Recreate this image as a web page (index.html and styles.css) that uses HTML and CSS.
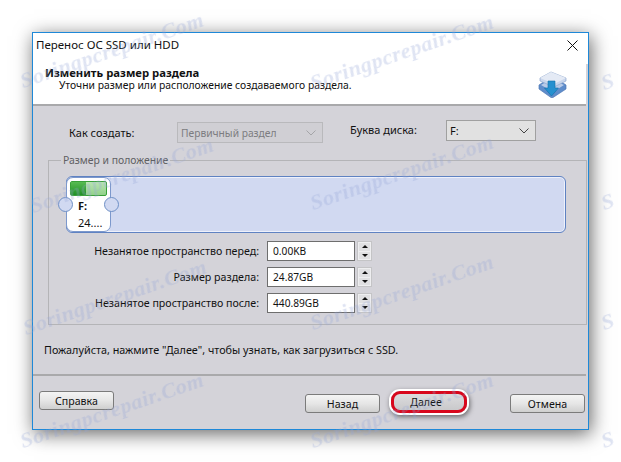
FILE: index.html
```html
<!DOCTYPE html>
<html lang="ru">
<head>
  <meta charset="UTF-8" />
  <title>Перенос ОС SSD или HDD</title>
  <link rel="stylesheet" href="styles.css">
</head>
<body>
  <div class="dialog">
    <div class="titlebar">
      <span>Перенос ОС SSD или HDD</span>
      <svg class="close" width="11" height="11" viewBox="0 0 11 11"><path d="M0.5 0.5L10.5 10.5M10.5 0.5L0.5 10.5" stroke="#111" fill="none"/></svg>
    </div>
    <div class="header">
      <div class="header-text">
        <h1>Изменить размер раздела</h1>
        <p>Уточни размер или расположение создаваемого раздела.</p>
      </div>
      <svg class="logo" width="29" height="27" viewBox="0 0 29 27">
        <path d="M1 14L7 10H22L28 14V18L15 26.5H13L1 18Z" fill="#5f8dcb" stroke="#4f78b4" stroke-width="0.7"/>
        <path d="M3 14L13 8L26 14L15 21Z" fill="#b9cbe8"/>
        <path d="M2 7L13 1L28 7V10L16 16L2 10Z" fill="#c9d6ec" stroke="#8fa8cf" stroke-width="0.7"/>
        <path d="M2 7L13 1L28 7L16 13Z" fill="#e4eaf5"/>
        <path d="M10 10H17V17H20.5L13.5 25L6.5 17H10Z" fill="#2590cf" stroke="#0f6ea8" stroke-width="0.6"/>
      </svg>
    </div>
    <div class="body">
      <div class="create-row">
        <span class="create-label">Как создать:</span>
        <div class="select select-off">
          <span>Первичный раздел</span>
          <span class="select-btn"><svg width="10" height="6" viewBox="0 0 10 6"><path d="M0.5 0.5L5 5L9.5 0.5" stroke="#a5a5a8" fill="none"/></svg></span>
        </div>
        <span class="letter-label">Буква диска:</span>
        <div class="select select-on">
          <span>F:</span>
          <span class="select-btn"><svg width="10" height="6" viewBox="0 0 10 6"><path d="M0.5 0.5L5 5L9.5 0.5" stroke="#444" fill="none"/></svg></span>
        </div>
      </div>
      <fieldset class="group">
        <legend>Размер и положение</legend>
        <div class="partbar">
          <div class="part">
            <div class="part-usage"><div class="part-fill"></div></div>
            <b>F:</b>
            <span>24....</span>
            <i class="handle handle-l"></i>
            <i class="handle handle-r"></i>
          </div>
        </div>
        <div class="fields">
          <div class="field">
            <label>Незанятое пространство перед:</label>
            <div class="input">0.00KB</div>
            <div class="spin"><span class="up"></span><span class="down"></span></div>
          </div>
          <div class="field">
            <label>Размер раздела:</label>
            <div class="input">24.87GB</div>
            <div class="spin"><span class="up"></span><span class="down"></span></div>
          </div>
          <div class="field">
            <label>Незанятое пространство после:</label>
            <div class="input">440.89GB</div>
            <div class="spin"><span class="up"></span><span class="down"></span></div>
          </div>
        </div>
      </fieldset>
      <p class="hint">Пожалуйста, нажмите "Далее", чтобы узнать, как загрузиться с SSD.</p>
      <div class="footer">
        <button class="btn">Справка</button>
        <div class="footer-right">
          <button class="btn">Назад</button>
          <button class="btn btn-marked">Далее</button>
          <button class="btn">Отмена</button>
        </div>
      </div>
    </div>
  </div>

  <span class="mark mark-1">Soringpcrepair.Com</span>
  <span class="mark mark-2">Soringpcrepair.Com</span>
  <span class="mark mark-3">S</span>
  <span class="mark mark-4">Soringpcrepair.Com</span>
  <span class="mark mark-5">Soringpcrepair.Com</span>
  <span class="mark mark-6">S</span>
  <span class="mark mark-7">Soringpcrepair.Com</span>
  <span class="mark mark-8">Soringpcrepair.Com</span>
  <span class="mark mark-9">S</span>
  <span class="mark mark-10">Soringpcrepair.Com</span>
  <span class="mark mark-11">Soringpcrepair.Com</span>
  <span class="mark mark-12">S</span>
</body>
</html>
```

FILE: styles.css
```css
* {
  box-sizing: border-box;
  margin: 0;
  padding: 0;
}

html, body {
  height: 462px;
  overflow: hidden;
}

body {
  background: #fff;
  padding: 32px 0 0 32px;
  font-family: "Noto Sans", "Liberation Sans", sans-serif;
  font-size: 11px;
  color: #111;
  position: relative;
}

.dialog {
  width: 557px;
  height: 398px;
  border: 1px solid #1e88d8;
  background: #d4d3d9;
  box-shadow: 2px 4px 18px rgba(0, 0, 0, 0.6);
  display: flex;
  flex-direction: column;
}

.titlebar {
  height: 31px;
  background: #fff;
  padding: 5px 10px 0 3px;
  display: flex;
  justify-content: space-between;
  align-items: flex-start;
  font-size: 11.5px;
  line-height: 14px;
}

.close {
  margin-top: 2px;
}

.header {
  height: 42px;
  background: #fff;
  border-bottom: 2px solid #a9a9ab;
  margin-right: 2px;
  padding: 2px 19px 0 12px;
  display: flex;
  justify-content: space-between;
  align-items: flex-start;
}

.header h1 {
  font-size: 11.3px;
  line-height: 13px;
}

.header p {
  font-size: 10.35px;
  line-height: 13px;
  padding-left: 14px;
}

.logo {
  margin-top: 5px;
}

.body {
  flex: 1;
  display: flex;
  flex-direction: column;
  padding-left: 6px;
}

.create-row {
  height: 47px;
  flex-shrink: 0;
  padding-top: 14px;
  display: flex;
  align-items: flex-start;
}

.create-label {
  width: 138px;
  padding: 5px 0 0 30px;
}

.letter-label {
  width: 96px;
  margin-left: 27px;
  padding-top: 2px;
}

.select {
  height: 21px;
  display: flex;
  justify-content: space-between;
  align-items: center;
  padding: 0 4px 0 3px;
}

.select-off {
  width: 146px;
  margin-top: 2px;
  font-size: 10.25px;
  background: #d0cfd4;
  border: 1px solid #b9b9bc;
  color: #7c7c80;
}

.select-on {
  width: 90px;
  background: #e1e1e1;
  border: 1px solid #a0a0a0;
}

.select-btn {
  display: flex;
  margin-right: 2px;
}

.group {
  height: 172px;
  flex-shrink: 0;
  margin: 0 1px 0 9px;
  border: 1px solid #b4b4b7;
  padding: 9px 0 0 17px;
}

.group legend {
  margin-left: -5px;
  padding: 0 2px;
  font-size: 10.4px;
  color: #5f5f63;
  line-height: 14px;
}

.partbar {
  width: 500px;
  height: 57px;
  border: 1px solid #5f82c2;
  box-shadow: inset 0 0 0 1px #eef1fb;
  border-radius: 6px;
  background: #d1d9f1;
}

.part {
  position: relative;
  width: 45px;
  height: 55px;
  margin-left: -1px;
  background: #fff;
  border: 1px solid #7c98cc;
  border-radius: 7px;
  padding: 3px 0 0 3px;
  display: flex;
  flex-direction: column;
}

.part b {
  padding: 3px 0 0 8px;
  line-height: 14px;
}

.part span {
  padding: 3px 0 0 8px;
  line-height: 14px;
}

.part-usage {
  width: 37px;
  height: 15px;
  border: 1px solid #38a038;
  border-radius: 2px;
  background: linear-gradient(#b9e4b2, #93d28b);
}

.part-fill {
  width: 15px;
  height: 13px;
  background: linear-gradient(#58bb52, #1f8f25);
}

.handle {
  position: absolute;
  top: 19px;
  width: 15px;
  height: 15px;
  border: 1px solid #6f90c6;
  border-radius: 50%;
  background: #d1d9f1;
}

.handle-l {
  left: -9px;
}

.handle-r {
  right: -9px;
}

.fields {
  padding-top: 8px;
  display: flex;
  flex-direction: column;
  gap: 6px;
}

.field {
  display: flex;
  align-items: center;
  height: 20px;
}

.field label {
  width: 201px;
  text-align: right;
  padding-right: 8px;
  font-size: 10.65px;
  white-space: nowrap;
}

.input {
  width: 88px;
  height: 20px;
  background: #fff;
  border: 1px solid #6e6e6e;
  padding: 2px 0 0 5px;
  font-size: 10.2px;
  line-height: 14px;
}

.spin {
  width: 15px;
  height: 20px;
  margin-left: 2px;
  background: #eeeef0;
  border: 1px solid #c4c4c6;
  padding: 1px;
  display: flex;
  flex-direction: column;
  gap: 1px;
}

.spin span {
  flex: 1;
  background: #e0e0e2;
  display: flex;
  align-items: center;
  justify-content: center;
}

.spin .up::before {
  content: "";
  border: 3px solid transparent;
  border-top: 0;
  border-bottom: 3px solid #111;
}

.spin .down::before {
  content: "";
  border: 3px solid transparent;
  border-bottom: 0;
  border-top: 3px solid #111;
}

.hint {
  margin-top: 18px;
  margin-left: 5px;
  font-size: 10.8px;
  line-height: 14px;
  height: 31px;
  flex-shrink: 0;
}

.footer {
  border-top: 2px solid #a9a9ab;
  margin: 0 2px 0 -6px;
  padding: 15px 1px 0 6px;
  display: flex;
  justify-content: space-between;
  align-items: flex-start;
}

.footer-right {
  display: flex;
  align-items: flex-start;
  gap: 11px;
  margin-top: 3px;
}

.btn {
  width: 75px;
  height: 19px;
  border: 1px solid #7b7b7b;
  border-radius: 3px;
  background: linear-gradient(#f4f4f4, #e6e6e6 50%, #cfcfcf);
  font: 10.6px "Noto Sans", "Liberation Sans", sans-serif;
  color: #111;
}

.btn-marked {
  width: 76px;
  height: 22px;
  border: 3px solid #d8071c;
  border-radius: 9px;
  margin: -3px 32px 0 0;
  padding-right: 6px;
  background: linear-gradient(#dcdcde, #c9c9cb);
  box-shadow: 0 0 0 2px #fff, 1px 2px 5px 2px rgba(0, 0, 0, 0.5);
}

/* watermark */
.mark {
  position: absolute;
  font: italic bold 22px "Liberation Serif", serif;
  letter-spacing: 0.5px;
  color: rgba(150, 165, 215, 0.3);
  white-space: nowrap;
  transform: rotate(-19deg);
  transform-origin: left bottom;
  filter: blur(0.4px);
  pointer-events: none;
}

.mark-1 { left: 25px; top: 68px; }
.mark-2 { left: 315px; top: 70px; }
.mark-3 { left: 606px; top: 70px; }
.mark-4 { left: 35px; top: 193px; }
.mark-5 { left: 315px; top: 190px; }
.mark-6 { left: 606px; top: 190px; }
.mark-7 { left: 28px; top: 315px; }
.mark-8 { left: 315px; top: 310px; }
.mark-9 { left: 606px; top: 310px; }
.mark-10 { left: 25px; top: 428px; }
.mark-11 { left: 315px; top: 428px; }
.mark-12 { left: 606px; top: 428px; }
```
